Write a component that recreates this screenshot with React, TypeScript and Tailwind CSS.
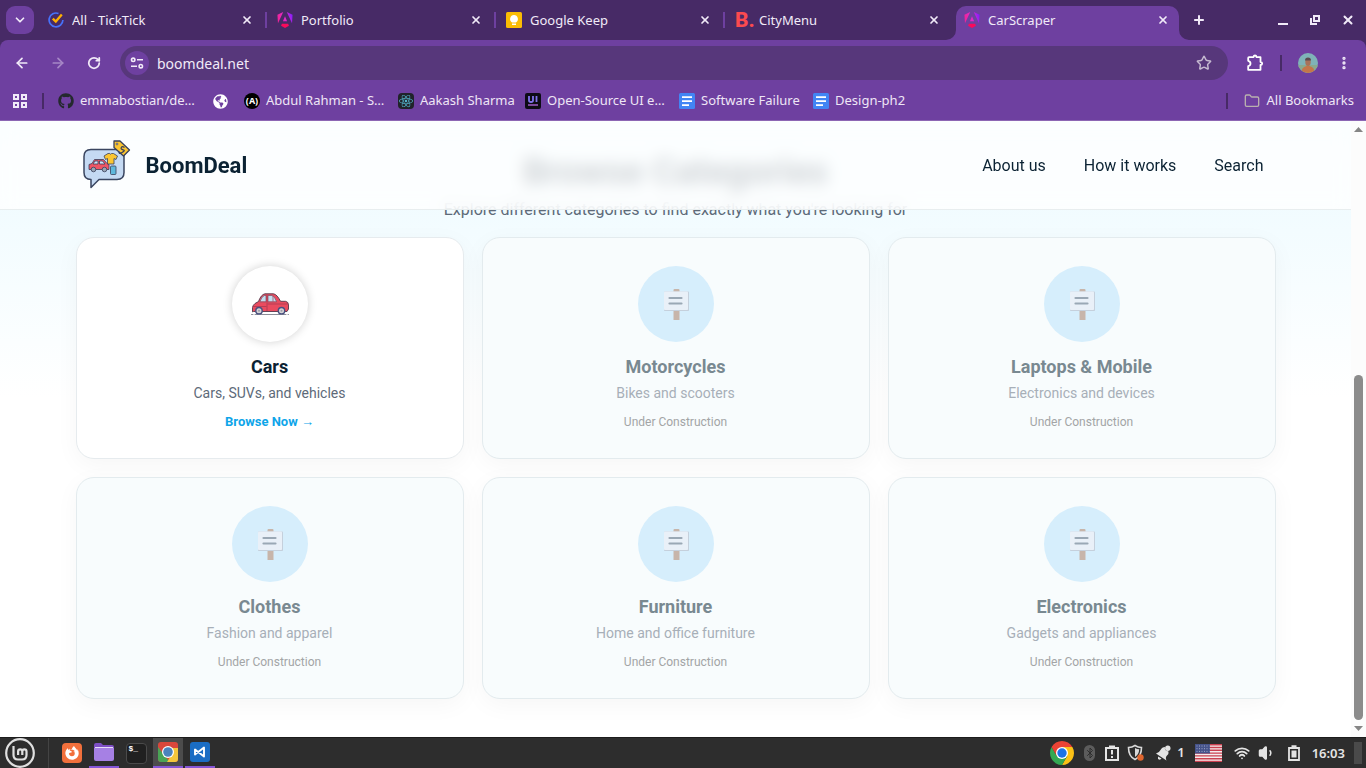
import React from "react";
import {
  ArrowLeft,
  ArrowRight,
  Bluetooth,
  ChevronDown,
  EllipsisVertical,
  Folder,
  Plus,
  RotateCw,
  Star,
  Volume1,
  Wifi,
  X,
} from "lucide-react";
import { FaFirefoxBrowser, FaGithub, FaGlobeAmericas, FaReact } from "react-icons/fa";

const uiFont = "font-['Noto_Sans','Open_Sans',sans-serif]";
const pageFont = "font-['Roboto',sans-serif]";

function AngularIcon({ id }: { id: string }) {
  return (
    <svg viewBox="0 0 24 24" className="size-4">
      <defs>
        <linearGradient id={id} x1="0" y1="0.3" x2="1" y2="0.1">
          <stop offset="0" stopColor="#f0249c" />
          <stop offset="0.5" stopColor="#e02ad0" />
          <stop offset="1" stopColor="#7a1cff" />
        </linearGradient>
      </defs>
      <path
        fill={`url(#${id})`}
        d="M14.692 0l7.832 16.855.814-12.856L14.692 0ZM9.308 0 .662 3.999l.814 12.856L9.308 0Zm-.405 13.93h6.198L12 6.396 8.903 13.93Z"
      />
      <path fill="#fb0a5c" d="M16.712 17.711H7.288l-1.204 2.916L12 24l5.916-3.373-1.204-2.916Z" />
    </svg>
  );
}

function TickTickIcon() {
  return (
    <svg viewBox="0 0 16 16" className="size-4" fill="none">
      <path d="M10.500 1.500A6.900 6.900 0 1 0 14.900 8" stroke="#4772fa" strokeWidth="1.700" />
      <path d="M4.800 6.600 7.800 9.600 13.800 2.400" stroke="#ffb000" strokeWidth="2.300" />
    </svg>
  );
}

function KeepIcon() {
  return (
    <svg viewBox="0 0 16 16" className="size-4">
      <rect width="16" height="16" rx="1.5" fill="#fbbc04" />
      <path d="M8 3a4 4 0 0 0-2 7.4h4A4 4 0 0 0 8 3ZM6 11.4h4V13H6z" fill="#fff" />
    </svg>
  );
}

function DocsIcon() {
  return (
    <svg viewBox="0 0 16 16" className="size-4">
      <rect width="16" height="16" rx="1.5" fill="#4285f4" />
      <path d="M3 3.2h10v1.8H3zM3 7.2h10V9H3zM3 11.2h7V13H3z" fill="#fff" />
    </svg>
  );
}

function ChromeIcon({ className }: { className: string }) {
  return (
    <svg viewBox="0 0 24 24" className={className}>
      <path d="M22.39 6A12 12 0 0 1 12 24l5.2-9L12 6Z" fill="#fbc116" />
      <path d="M12 24A12 12 0 0 1 1.61 6l5.2 9 10.39 0Z" fill="#34a853" />
      <path d="M1.61 6 6.8 15 12 12V6H22.39A12 12 0 0 0 1.61 6Z" fill="#ea4335" />
      <circle cx="12" cy="12" r="6" fill="#fff" />
      <circle cx="12" cy="12" r="4.7" fill="#1a73e8" />
    </svg>
  );
}

const tabs = [
  { title: "All - TickTick", icon: <TickTickIcon /> },
  { title: "Portfolio", icon: <AngularIcon id="ng-portfolio" /> },
  { title: "Google Keep", icon: <KeepIcon /> },
  {
    title: "CityMenu",
    icon: (
      <span className="font-['Roboto',sans-serif] text-[21px] leading-4 font-extrabold text-[#fb4a4f]">B.</span>
    ),
  },
];

function TabStrip() {
  return (
    <div className="flex h-10 items-start bg-[#472a66] text-[13px] text-[#f1eaf8]">
      <button aria-label="Search tabs" className="mt-1.5 ml-1.5 grid size-7 shrink-0 place-items-center rounded-[9px] bg-[#6e40a0]">
        <ChevronDown className="size-3.5" strokeWidth={3} />
      </button>
      <div className="flex min-w-0 pl-1">
        {tabs.map((tab, i) => (
          <div key={tab.title} className="flex h-10 w-[229px] min-w-0 items-center pr-3 pl-2.5">
            <span className="grid size-4 shrink-0 place-items-center">{tab.icon}</span>
            <span className="ml-2 flex-1 truncate pt-0.5">{tab.title}</span>
            <button aria-label={`Close ${tab.title}`} className="grid size-4 place-items-center">
              <X className="size-3" strokeWidth={3.4} />
            </button>
            <span className={i < 3 ? "-mr-3 ml-2.5 h-4 w-0.5 bg-[#6e40a0]" : "-mr-3 ml-2.5 h-4 w-0.5"} />
          </div>
        ))}
        <div className="relative mt-1.5 ml-0.5 flex h-[34px] w-[223px] items-center rounded-t-[10px] bg-[#6e40a0] px-2 pb-1.5">
          <svg className="absolute bottom-0 -left-2.5 size-2.5" viewBox="0 0 10 10">
            <path d="M10 0A10 10 0 0 1 0 10h10z" fill="#6e40a0" />
          </svg>
          <svg className="absolute -right-2.5 bottom-0 size-2.5" viewBox="0 0 10 10">
            <path d="M0 0a10 10 0 0 0 10 10H0z" fill="#6e40a0" />
          </svg>
          <AngularIcon id="ng-scraper" />
          <span className="ml-2 flex-1 pt-0.5">CarScraper</span>
          <button aria-label="Close CarScraper" className="grid size-4 place-items-center">
            <X className="size-3" strokeWidth={3.4} />
          </button>
        </div>
      </div>
      <button aria-label="New tab" className="ml-2.5 grid h-10 w-5 place-items-center">
        <Plus className="size-3.5" strokeWidth={3.4} />
      </button>
      <div className="ml-auto flex h-10 items-center gap-5 pr-[11px]">
        <button aria-label="Minimize">
          <svg viewBox="0 0 12 12" className="size-3">
            <path d="M1 9h10v2H1z" fill="#f1eaf8" />
          </svg>
        </button>
        <button aria-label="Restore">
          <svg viewBox="0 0 12 12" className="size-3" fill="none" stroke="#f1eaf8" strokeWidth="2">
            <path d="M5 2h5v5H5zM2 4v6h6" />
          </svg>
        </button>
        <button aria-label="Close window">
          <X className="size-3.5" strokeWidth={3.4} />
        </button>
      </div>
    </div>
  );
}

function Toolbar() {
  return (
    <div className="bg-[#472a66]">
      <div className="flex h-[46px] items-center rounded-t-lg bg-[#6e40a0] pl-3.5 text-[#f1eaf8]">
        <button aria-label="Back" className="grid w-4 place-items-center">
          <ArrowLeft className="size-4" strokeWidth={2.6} />
        </button>
        <button aria-label="Forward" className="ml-5 grid w-4 place-items-center text-[#a687c6]">
          <ArrowRight className="size-4" strokeWidth={2.6} />
        </button>
        <button aria-label="Reload" className="ml-5 grid w-4 place-items-center">
          <RotateCw className="size-3.5" strokeWidth={3} />
        </button>
        <div className="ml-[18px] flex h-[34px] flex-1 items-center rounded-full bg-[#57377b] pr-4 pl-[5px]">
          <button aria-label="View site information" className="grid size-6 place-items-center rounded-full bg-[#6e40a0]">
            <svg viewBox="0 0 14 14" className="size-3.5" fill="none" stroke="#f1eaf8" strokeWidth="1.6">
              <circle cx="3.2" cy="3.8" r="1.7" />
              <circle cx="10.8" cy="10.2" r="1.7" />
              <path d="M7 3.8h6M1 10.2h6" />
            </svg>
          </button>
          <input
            aria-label="Address"
            defaultValue="boomdeal.net"
            className="ml-2 min-w-0 flex-1 bg-transparent text-[14px] outline-none"
          />
          <button aria-label="Bookmark this page">
            <Star className="size-4 text-[#c5b9d0]" strokeWidth={2.2} />
          </button>
        </div>
        <button aria-label="Extensions" className="ml-[18px]">
          <svg viewBox="0 0 18 18" className="size-[18px]" fill="none" stroke="#fff" strokeWidth="1.800" strokeLinejoin="round">
            <path d="M3 3.200h4.500q.2-1.700 1.500-1.700t1.500 1.700H14.500V8q1.700.2 1.700 1.500t-1.700 1.500v4.800H2.200v-3.600q2.300-.5 2.300-2.700T2.200 6.800V4q0-.8.8-.8z" />
          </svg>
        </button>
        <span className="ml-4 h-4 w-0.5 bg-[#472a66]" />
        <button aria-label="Profile" className="ml-4">
          <svg viewBox="0 0 20 20" className="size-5">
            <defs>
              <clipPath id="avatar">
                <circle cx="10" cy="10" r="10" />
              </clipPath>
            </defs>
            <g clipPath="url(#avatar)">
              <path fill="#7fb3b8" d="M0 0h20v20H0z" />
              <path fill="#8ba98e" d="M0 12h20v8H0z" />
              <path fill="#c4764a" d="M3.5 20c0-5 2.5-7 6.500-7s6.500 2 6.500 7z" />
              <ellipse cx="10" cy="9" rx="2.700" ry="4" fill="#a9725a" />
              <path fill="#5c4a50" d="M7 7.500a3 3 0 0 1 6 0z" />
            </g>
          </svg>
        </button>
        <button aria-label="Menu" className="mr-3.5 ml-[18px]">
          <EllipsisVertical className="size-4" strokeWidth={3} />
        </button>
      </div>
    </div>
  );
}

const bookmarks = [
  { label: "emmabostian/de…", width: "w-[154px]", icon: <FaGithub className="size-4 text-[#24292e]" /> },
  { label: "", width: "w-8", icon: <FaGlobeAmericas className="size-[15px] text-white" /> },
  {
    label: "Abdul Rahman - S…",
    width: "w-[154px]",
    icon: (
      <span className="grid size-4 place-items-center rounded-full bg-black text-[9px] font-bold text-white">(A)</span>
    ),
  },
  {
    label: "Aakash Sharma",
    width: "w-[127px]",
    icon: (
      <span className="grid size-4 place-items-center rounded-sm bg-[#20232a]">
        <FaReact className="size-3.5 text-[#53b5cc]" />
      </span>
    ),
  },
  {
    label: "Open-Source UI e…",
    width: "w-[154px]",
    icon: (
      <svg viewBox="0 0 16 16" className="size-4">
        <rect width="16" height="16" rx="2" fill="#0d0b16" />
        <path d="M4 3v4.500q0 1.500 2 1.500t2-1.500V3M11.500 3v6" stroke="#7f72ea" strokeWidth="1.800" fill="none" />
        <path d="M3 12h10" stroke="#a05cc8" strokeWidth="1.500" />
      </svg>
    ),
  },
  { label: "Software Failure", width: "w-[134px]", icon: <DocsIcon /> },
  { label: "Design-ph2", width: "w-[88px]", icon: <DocsIcon /> },
];

function BookmarkBar() {
  return (
    <nav aria-label="Bookmarks" className="flex h-[35px] items-center border-b border-[#8c66b4] bg-[#6e40a0] pb-1 pl-3 text-[13px] text-[#eee6f6]">
      <button aria-label="Apps">
        <svg viewBox="0 0 16 16" className="size-4" fill="none" stroke="#f1eaf8" strokeWidth="2">
          <path d="M2 2h4v4H2zM10 2h4v4h-4zM2 10h4v4H2zM10 10h4v4h-4z" />
        </svg>
      </button>
      <span className="mx-3.5 h-4 w-0.5 bg-[#472a66]" />
      {bookmarks.map((b) => (
        <a key={b.label} href="#" aria-label={b.label || "Bookmark"} className={`flex shrink-0 items-center gap-1.5 whitespace-nowrap ${b.width}`}>
          <span className="grid size-4 shrink-0 place-items-center">{b.icon}</span>
          {b.label}
        </a>
      ))}
      <span className="ml-auto h-4 w-0.5 bg-[#472a66]" />
      <a href="#" className="mr-3 ml-4 flex items-center gap-1.5 whitespace-nowrap">
        <Folder className="size-4 text-[#b9b0ae]" strokeWidth={2} />
        All Bookmarks
      </a>
    </nav>
  );
}

function BoomDealLogo() {
  return (
    <svg viewBox="0 0 50 50" className="size-[50px]" strokeLinejoin="round">
      <path
        d="M9 9.500h26q7 0 7 7v16q0 7-7 7H17l-8 8v-8q-7 0-7-7v-16q0-7 7-7z"
        fill="#c5daf3"
        stroke="#3a4560"
        strokeWidth="1.500"
      />
      <g stroke="#39405a" strokeWidth="0.800">
        <path d="M7 29.500v-5l3-1 2.500-4h9l3.500 4 2 1v5z" fill="#ee5565" />
        <path d="M11 24l2-3h3v3zM17.500 24v-3h3l2.500 3z" fill="#cfe5fa" />
        <circle cx="11.500" cy="29.500" r="2.300" fill="#9aa4b4" />
        <circle cx="22.500" cy="29.500" r="2.300" fill="#9aa4b4" />
        <path d="M26 13.500l-4 2.500 1.500 3.500 2-1v5.500h6.500v-5.500l2 1 1.500-3.500-4-2.500h-2q-.8 1.500-1.700 0z" fill="#fbc531" />
        <rect x="28.500" y="26" width="5.500" height="8.500" rx="1" fill="#5fb8dc" />
        <path d="M32 1h6L47.500 10 41.500 16 32 7.500z" fill="#fbc531" strokeWidth="1.300" />
        <circle cx="35" cy="4" r="0.900" fill="#fff" />
        <path d="M42.500 7.500q-2.300-1.800-3.200 0t1.800 2.300-1 2.700-3-1" fill="none" strokeWidth="1.200" />
      </g>
    </svg>
  );
}

function SiteHeader() {
  return (
    <header className="absolute inset-x-0 top-0 z-10 border-b border-[#e8eeef] bg-white/80 backdrop-blur-[8px]">
      <div className="mx-auto flex h-[88px] max-w-[1200px] items-center justify-between pr-3 pl-1.5 text-[#0b2233]">
        <a href="#" className="flex items-center gap-3.5">
          <BoomDealLogo />
          <span className="text-[22px] font-bold">BoomDeal</span>
        </a>
        <nav className="flex gap-[38px] pt-0.5 text-[16px]">
          <a href="#about">About us</a>
          <a href="#how">How it works</a>
          <a href="#search">Search</a>
        </nav>
      </div>
    </header>
  );
}

function CarIcon() {
  return (
    <svg viewBox="0 0 38 24" className="h-6 w-[38px]" strokeLinejoin="round" strokeLinecap="round">
      <path d="M0.500 22.500h1.500M4 22.500h31M37 22.500h.5" stroke="#8b8e98" strokeWidth="1" />
      <path
        d="M1.500 19.500V15.500q.5-2.500 2.500-4l3.500-2Q10 2.500 14 1.800h8.500q3.500.5 7 7.500h5q3 .5 3 3.700v4l-1.500 2.500H3z"
        fill="#ea4b5f"
        stroke="#54384b"
        strokeWidth="0.900"
      />
      <path d="M9 9.500q1.800-5.500 4.500-6h1.500v6zM17 9.500v-6h4q2.500.5 4.500 6z" fill="#c3def0" stroke="#7a5064" strokeWidth="0.700" />
      <path d="M16 3v15.500M2 14.500h13M17 12h19M22 4v5" stroke="#a03a50" strokeWidth="0.700" fill="none" />
      <circle cx="8" cy="18.700" r="3.200" fill="#d6d4d6" stroke="#4a5180" strokeWidth="1.400" />
      <circle cx="30.500" cy="18.700" r="3.200" fill="#d6d4d6" stroke="#4a5180" strokeWidth="1.400" />
      <circle cx="8" cy="18.700" r="1" fill="#9c9ca8" />
      <circle cx="30.500" cy="18.700" r="1" fill="#9c9ca8" />
    </svg>
  );
}

function PlacardIcon() {
  return (
    <svg viewBox="0 0 26 34" className="h-[34px] w-[26px]">
      <path d="M10.500 3q0-1 1-1h4q1 0 1 1v30h-6z" fill="#c7b5aa" />
      <rect x="1" y="4.500" width="25" height="19.500" rx="0.800" fill="#c5d0dc" />
      <rect x="1" y="4.500" width="24" height="18.500" rx="0.800" fill="#e9f0f8" />
      <path d="M6.500 11h12M6.500 16.500h12" stroke="#9aa8b5" strokeWidth="2.200" strokeLinecap="round" />
    </svg>
  );
}

const categories = [
  { name: "Cars", text: "Cars, SUVs, and vehicles", open: true },
  { name: "Motorcycles", text: "Bikes and scooters" },
  { name: "Laptops & Mobile", text: "Electronics and devices" },
  { name: "Clothes", text: "Fashion and apparel" },
  { name: "Furniture", text: "Home and office furniture" },
  { name: "Electronics", text: "Gadgets and appliances" },
];

function CategoryCard({ name, text, open }: { name: string; text: string; open?: boolean }) {
  return (
    <article
      className={`flex flex-col items-center rounded-[18px] border px-6 py-7 text-center shadow-[0_6px_24px_rgba(0,0,0,0.04)] ${
        open ? "border-[#e6ebee] bg-white" : "border-[#e3ebee] bg-[#f8fcfd]"
      }`}
    >
      <div
        className={`grid size-[76px] place-items-center rounded-full ${
          open ? "bg-white shadow-[0_0_10px_rgba(0,0,0,0.18)]" : "bg-[#d6eefc]"
        }`}
      >
        {open ? <CarIcon /> : <PlacardIcon />}
      </div>
      <h3 className={`mt-3.5 text-[18px] leading-[22px] font-bold ${open ? "text-[#0b2233]" : "text-[#798991]"}`}>{name}</h3>
      <p className={`mt-[5px] text-[14px] leading-5 ${open ? "text-[#5d6a79]" : "text-[#a7afb8]"}`}>{text}</p>
      {open ? (
        <a href="#cars" className="mt-[11px] text-[13px] leading-4 font-bold text-[#0ea5e9]">
          Browse Now →
        </a>
      ) : (
        <span className="mt-[11px] text-[12px] leading-4 text-[#a3a5a6]">Under Construction</span>
      )}
    </article>
  );
}

function Scrollbar() {
  return (
    <div className="flex w-[15px] shrink-0 flex-col items-center justify-between bg-[#fcfcfc] py-1.5">
      <svg viewBox="0 0 9 5" className="h-[5px] w-[9px]">
        <path d="M0 5 4.500 0 9 5z" fill="#858585" />
      </svg>
      <div className="mt-auto mb-1.5 h-[345px] w-[9px] rounded-full bg-[#8b8b8b]" />
      <svg viewBox="0 0 9 5" className="h-[5px] w-[9px]">
        <path d="M0 0h9L4.500 5z" fill="#858585" />
      </svg>
    </div>
  );
}

function Page() {
  return (
    <div className={`flex min-h-0 flex-1 bg-white ${pageFont}`}>
      <main className="relative min-w-0 flex-1 overflow-hidden bg-linear-to-b from-[#ebfaff] to-white to-45%">
        <SiteHeader />
        <section className="mx-auto max-w-[1200px] pt-[30px]">
          <h2 className="text-center text-[36px] leading-[42px] font-bold text-[#0b2233]">Browse Categories</h2>
          <p className="mt-1.5 text-center text-[16px] leading-[22px] text-[#5d6a79]">
            Explore different categories to find exactly what you&apos;re looking for
          </p>
          <div className="mt-4 grid grid-cols-3 gap-[18px]">
            {categories.map((c) => (
              <CategoryCard key={c.name} {...c} />
            ))}
          </div>
        </section>
      </main>
      <Scrollbar />
    </div>
  );
}

function Flag() {
  return (
    <svg viewBox="0 0 27 18" className="h-[18px] w-[27px]">
      <rect width="27" height="18" fill="#f4eded" />
      <path d="M0 .7h27M0 3.500h27M0 6.300h27M0 9.100h27M0 11.900h27M0 14.700h27M0 17.400h27" stroke="#c9404f" strokeWidth="1.400" />
      <rect width="15" height="9.500" fill="#45538a" />
      <path d="M1.500 2h13M1.500 4.700h13M1.500 7.400h13" stroke="#aab1cf" strokeWidth="0.900" strokeDasharray="1 1.500" />
    </svg>
  );
}

function Taskbar() {
  return (
    <footer className="flex h-[31px] shrink-0 items-stretch border-t border-[#1c1c1c] bg-[#2d2d2d] text-[#e4e4e4]">
      <button aria-label="Start menu" className="ml-1 grid w-8 place-items-center">
        <svg viewBox="0 0 30 30" className="size-[30px]" fill="none" stroke="#e0e0e0">
          <circle cx="15" cy="15" r="13.800" strokeWidth="2.200" />
          <path d="M8.500 8v9q0 4.500 4.500 4.500h4q4.500 0 4.500-4.500v-3.500q0-2.200-2.100-2.200t-2.100 2.200V17M17.300 13.500q0-2.200-2.100-2.200t-2.100 2.200V17" strokeWidth="2.200" />
        </svg>
      </button>
      <span className="mr-2 ml-3 w-px bg-[#444]" />
      <div className="flex">
        <button aria-label="Firefox" className="mr-0.5 grid w-[30px] place-items-center">
          <span className="grid size-5 place-items-center rounded bg-[#f2703c]">
            <FaFirefoxBrowser className="size-3.5 text-white" />
          </span>
        </button>
        <button aria-label="Files" className="mr-0.5 grid w-[30px] place-items-center border-b-2 border-[#8555d6]">
          <svg viewBox="0 0 20 18" className="h-[18px] w-5">
            <path d="M0 2q0-2 2-2h5l2 2h9q2 0 2 2v12H0z" fill="#7e4fc4" />
            <path d="M0 5h20v11q0 2-2 2H2q-2 0-2-2z" fill="#a680e4" />
            <path d="M1 4.500h18" stroke="#e7ddf7" strokeWidth="1" />
          </svg>
        </button>
        <button aria-label="Terminal" className="mr-0.5 grid w-[30px] place-items-center">
          <span className="size-[21px] rounded border border-[#4a4a4a] bg-[#202020] pl-0.5 text-left font-['Liberation_Mono',monospace] text-[8px] leading-[10px] font-bold text-white">
            $_
          </span>
        </button>
        <button aria-label="Chrome" className="mr-0.5 grid w-[30px] place-items-center border-b-2 border-[#8555d6] bg-[#4c4c4c]">
          <svg viewBox="0 0 20 20" className="size-5">
            <rect width="20" height="20" rx="3" fill="#d9473c" />
            <path d="M0 5l6 8 6 7H3q-3 0-3-3z" fill="#4aa455" />
            <path d="M10 6h10v11q0 3-3 3H9l5-8z" fill="#f3c63c" />
            <circle cx="10" cy="10" r="6" fill="#fff" />
            <circle cx="10" cy="10" r="4.800" fill="#4b83bd" />
          </svg>
        </button>
        <button aria-label="Code" className="grid w-[30px] place-items-center border-b-2 border-[#8555d6]">
          <svg viewBox="0 0 20 20" className="size-5">
            <rect width="20" height="20" rx="3" fill="#1a6dc4" />
            <path d="M14 5.500v9L5 7.500v5z" fill="none" stroke="#fff" strokeWidth="1.900" strokeLinejoin="round" />
          </svg>
        </button>
      </div>
      <div className="ml-auto flex items-center text-[13px]">
        <ChromeIcon className="size-6" />
        <span className="ml-2.5 grid h-4 w-[11px] place-items-center rounded-full bg-[#5c5c5c]">
          <Bluetooth className="size-3 text-[#2d2d2d]" />
        </span>
        <svg viewBox="0 0 14 16" className="ml-2.5 h-4 w-3.5" fill="none" stroke="#e4e4e4" strokeWidth="2">
          <path d="M1 3h12v12H1z" />
          <path d="M4 1.500h6M7 5v4.500M7 11v2" />
        </svg>
        <svg viewBox="0 0 18 18" className="ml-2 size-[18px]">
          <path d="M8 1.500q3 2 6.500 2 0 9-6.500 12-6.500-3-6.500-12 3.500 0 6.500-2z" fill="none" stroke="#d9d9d9" strokeWidth="1.600" />
          <path d="M8 4q2 1.200 4.200 1.300Q12 10.500 8 13z" fill="#d9d9d9" />
          <circle cx="13.500" cy="13.500" r="3.200" fill="#e0662f" />
        </svg>
        <svg viewBox="0 0 16 16" className="ml-2.5 size-4" fill="#e4e4e4">
          <path d="M1 8.500q3-.5 4.500-3.500T10 2q-1 3.500 3.500 4.500.5 2-1.500 4t-.5 5z" />
          <circle cx="12.800" cy="3.200" r="2.700" />
          <path d="M3 11.500l3.500 2q-1 1.500-2.500 1T3 11.500z" />
        </svg>
        <span className="ml-1.5 font-semibold">1</span>
        <span className="ml-2.5">
          <Flag />
        </span>
        <Wifi className="ml-3 size-4" strokeWidth={2.8} />
        <Volume1 className="ml-2 size-[18px]" fill="#e4e4e4" strokeWidth={2} />
        <svg viewBox="0 0 12 16" className="ml-3 h-4 w-3" fill="none" stroke="#e4e4e4" strokeWidth="1.800">
          <path d="M1 3h10v12H1zM3.500 1.200h5" />
          <path d="M3.500 5.500h5v7h-5z" fill="#e4e4e4" stroke="none" />
        </svg>
        <time className="ml-3 pt-px font-semibold">16:03</time>
        <span className="mr-1 ml-[9px] h-[22px] w-2 bg-[#4a4a4a]" />
      </div>
    </footer>
  );
}

export default function App() {
  return (
    <div className={`flex h-screen flex-col overflow-hidden ${uiFont}`}>
      <div className="shrink-0">
        <TabStrip />
        <Toolbar />
        <BookmarkBar />
      </div>
      <Page />
      <Taskbar />
    </div>
  );
}
